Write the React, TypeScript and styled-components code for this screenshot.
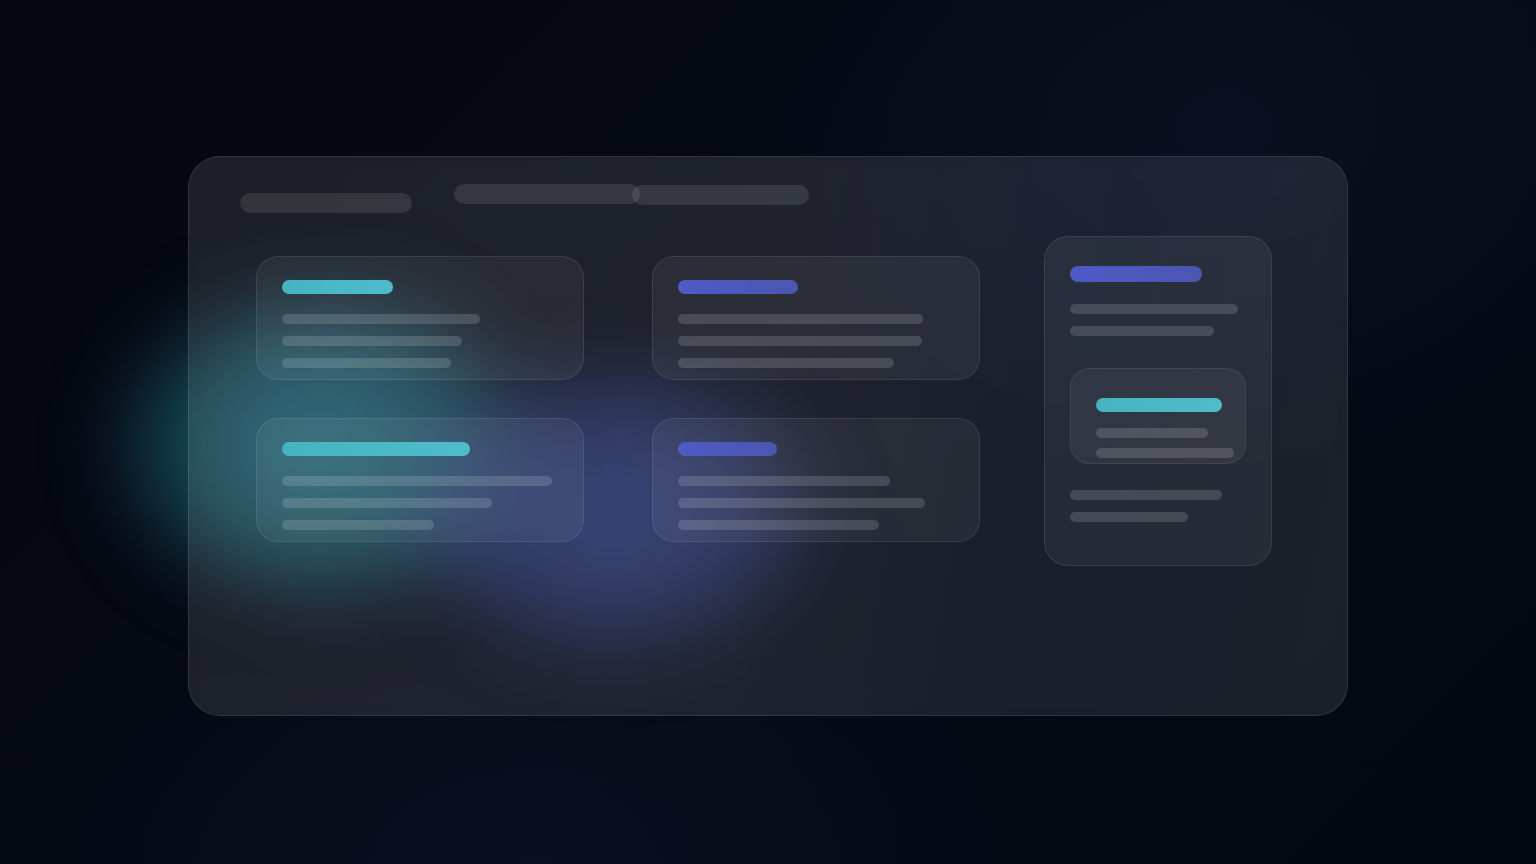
import React from "react";
import styled, { createGlobalStyle } from "styled-components";

const GlobalStyle = createGlobalStyle`
  html, body {
    margin: 0;
    padding: 0;
    height: 100%;
    background: #05080f;
    font-family: "Inter", "Liberation Sans", sans-serif;
  }
  #root {
    height: 100%;
  }
`;

const Page = styled.div`
  position: relative;
  width: 100%;
  height: 864px;
  overflow: hidden;
  display: flex;
  justify-content: center;
  align-items: flex-start;
  padding-top: 156px;
  box-sizing: border-box;
  background:
    radial-gradient(ellipse 700px 500px at 80% 15%, rgba(20, 30, 54, 0.3), transparent 70%),
    radial-gradient(ellipse 700px 400px at 35% 100%, rgba(14, 24, 48, 0.4), transparent 70%),
    linear-gradient(135deg, #04070f 0%, #060a16 50%, #040812 100%);
`;

const Glow = styled.div<{ $tone: "teal" | "blue" }>`
  position: absolute;
  border-radius: 50%;
  pointer-events: none;
  filter: blur(34px);
  ${({ $tone }) =>
    $tone === "teal"
      ? `
    left: 95px;
    top: 270px;
    width: 450px;
    height: 350px;
    background: radial-gradient(closest-side, rgba(34, 114, 132, 0.85), rgba(30, 104, 122, 0.62) 62%, transparent 100%);
  `
      : `
    left: 380px;
    top: 350px;
    width: 460px;
    height: 320px;
    background: radial-gradient(closest-side, rgba(56, 76, 164, 0.62), rgba(52, 72, 156, 0.44) 62%, transparent 100%);
  `}
`;

const Frame = styled.div`
  position: relative;
  z-index: 1;
  width: 1160px;
  height: 560px;
  box-sizing: border-box;
  padding: 27px 51px;
  border-radius: 32px;
  border: 1px solid rgba(255, 255, 255, 0.1);
  background: linear-gradient(
    100deg,
    rgba(255, 255, 255, 0.095) 0%,
    rgba(255, 255, 255, 0.1) 50%,
    rgba(200, 220, 255, 0.1) 75%,
    rgba(255, 255, 255, 0.095) 100%
  );
  backdrop-filter: blur(6px);
`;

const Header = styled.div`
  display: flex;
  align-items: flex-start;
  gap: 42px;
`;

const Pill = styled.div<{ $w: number; $top?: number; $overlap?: number }>`
  width: ${({ $w }) => $w}px;
  height: 20px;
  border-radius: 10px;
  background: rgba(255, 255, 255, 0.1);
  margin-top: ${({ $top }) => $top ?? 0}px;
  margin-left: ${({ $overlap }) => ($overlap ? -$overlap : 0)}px;
`;

const PillGroup = styled.div`
  display: flex;
  align-items: flex-start;
`;

const Body = styled.div`
  display: flex;
  align-items: flex-start;
  margin-top: 23px;
  padding-left: 16px;
`;

const CardGrid = styled.div`
  display: grid;
  grid-template-columns: 328px 328px;
  column-gap: 68px;
  row-gap: 38px;
  margin-top: 20px;
`;

const Card = styled.div`
  box-sizing: border-box;
  height: 124px;
  padding: 23px 25px 12px;
  border-radius: 22px;
  border: 1px solid rgba(255, 255, 255, 0.09);
  background: rgba(255, 255, 255, 0.055);
  display: flex;
  flex-direction: column;
`;

const SideCard = styled.div`
  box-sizing: border-box;
  width: 228px;
  height: 330px;
  margin-left: 64px;
  padding: 29px 25px;
  border-radius: 24px;
  border: 1px solid rgba(255, 255, 255, 0.09);
  background: rgba(255, 255, 255, 0.06);
  display: flex;
  flex-direction: column;
`;

const InnerCard = styled.div`
  box-sizing: border-box;
  width: 176px;
  height: 96px;
  margin-top: 32px;
  padding: 29px 25px 0;
  border-radius: 20px;
  border: 1px solid rgba(255, 255, 255, 0.08);
  background: rgba(255, 255, 255, 0.05);
  display: flex;
  flex-direction: column;
  overflow: hidden;
`;

const Title = styled.div<{ $w: number; $tone: "teal" | "blue"; $h?: number }>`
  width: ${({ $w }) => $w}px;
  height: ${({ $h }) => $h ?? 14}px;
  border-radius: 8px;
  flex-shrink: 0;
  background: ${({ $tone }) =>
    $tone === "teal"
      ? "linear-gradient(90deg, #45b4c0, #4fbccb)"
      : "linear-gradient(90deg, #4f5bc6, #4a56b0)"};
`;

const Line = styled.div<{ $w: number; $gap: number }>`
  width: ${({ $w }) => $w}px;
  height: 10px;
  border-radius: 5px;
  flex-shrink: 0;
  margin-top: ${({ $gap }) => $gap}px;
  background: rgba(255, 255, 255, 0.15);
`;

type CardData = { tone: "teal" | "blue"; title: number; lines: number[] };

const cards: CardData[] = [
  { tone: "teal", title: 111, lines: [198, 180, 169] },
  { tone: "blue", title: 120, lines: [245, 244, 216] },
  { tone: "teal", title: 188, lines: [270, 210, 152] },
  { tone: "blue", title: 99, lines: [212, 247, 201] },
];

export default function App() {
  return (
    <>
      <GlobalStyle />
      <Page>
        <Glow $tone="teal" />
        <Glow $tone="blue" />
        <Frame>
          <Header>
            <Pill $w={172} $top={9} />
            <PillGroup>
              <Pill $w={186} />
              <Pill $w={177} $top={1} $overlap={8} />
            </PillGroup>
          </Header>
          <Body>
            <CardGrid>
              {cards.map((c, i) => (
                <Card key={i}>
                  <Title $w={c.title} $tone={c.tone} />
                  {c.lines.map((w, j) => (
                    <Line key={j} $w={w} $gap={j === 0 ? 20 : 12} />
                  ))}
                </Card>
              ))}
            </CardGrid>
            <SideCard>
              <Title $w={132} $h={16} $tone="blue" />
              <Line $w={168} $gap={22} />
              <Line $w={144} $gap={12} />
              <InnerCard>
                <Title $w={126} $tone="teal" />
                <Line $w={112} $gap={16} />
                <Line $w={138} $gap={10} />
              </InnerCard>
              <Line $w={152} $gap={26} />
              <Line $w={118} $gap={12} />
            </SideCard>
          </Body>
        </Frame>
      </Page>
    </>
  );
}
